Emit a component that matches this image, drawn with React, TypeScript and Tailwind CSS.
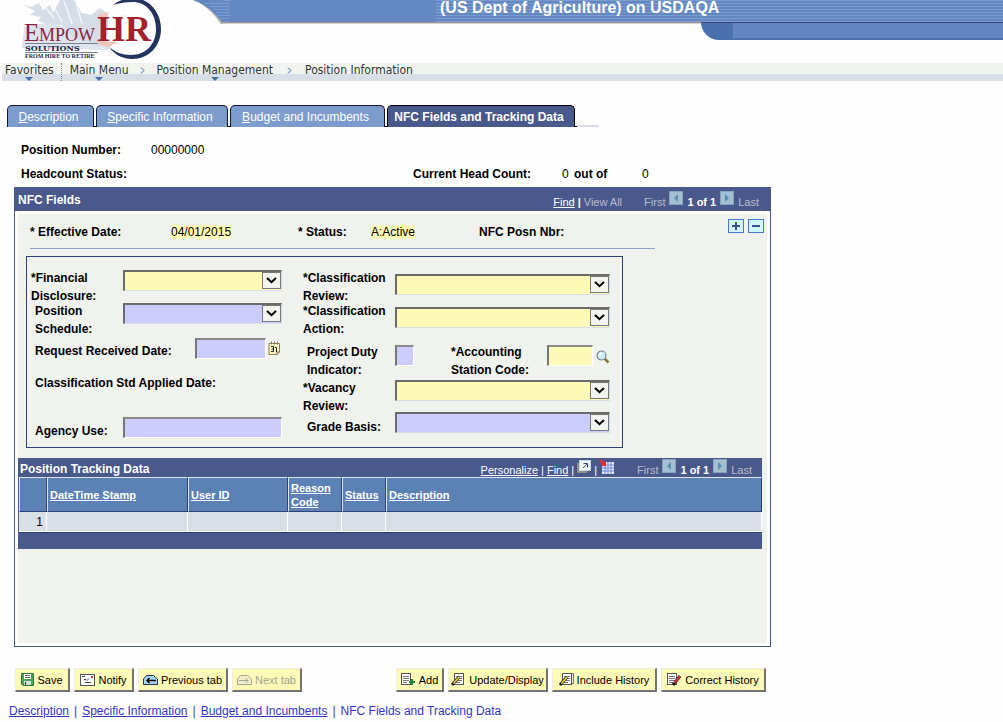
import React from "react";

const sans = "font-['Liberation_Sans',Arial,sans-serif]";

function Logo() {
  return (
    <svg width="150" height="62" viewBox="16 0 150 62" className="block" role="img" aria-label="EmpowHR Solutions">
      <g fill="#d5dde7">
        <path d="M22 4 L31 7 L39 3 L43 10 L50 5 L53 13 L60 0 L74 0 L82 13 L91 15 L100 8 L108 14 L108 34 L98 46 L74 38 L62 25 L48 24 L38 21 L41 17 L30 15 L35 11 Z" />
        <path d="M24 27 L50 22 L100 40 L112 44 L108 50 L22 48 Z" opacity="0.8" />
      </g>
      <path d="M42 3 L54 18 M52 3 L62 22 M64 1 L72 24 M76 2 L82 24" stroke="#f4f6f9" strokeWidth="1.5" fill="none" />
      <g fill="#f5c6b8">
        <path d="M98 15 L109 12 L106 18 L98 20 Z" />
        <path d="M96 41 L118 42 L108 47 L100 45 Z" />
      </g>
      <path
        d="M113 5 C119 0 127 -2 133 -2 C149 -2 161 12 161 29 C161 46 149 59 132 59 C122 59 114 54 109 47 C115 52 122 55 131 55 C146 55 156 44 156 29 C156 12 145 2 133 2 C126 2 119 3 113 5 Z"
        fill="#22335f"
      />
      <g fontFamily="'Liberation Serif', 'Times New Roman', serif">
        <text x="24" y="41" fontSize="25" fill="#8c2346">E</text>
        <text x="39" y="41" fontSize="18" fill="#8c2346">MPOW</text>
        <text x="97" y="41" fontSize="36" fontWeight="700" fill="#a3202c">HR</text>
        <text x="25" y="58" fontSize="6" fontWeight="700" fill="#222a48">FROM HIRE TO RETIRE</text>
      </g>
      <path d="M25 43.5 H98" stroke="#7b7f96" strokeWidth="1" />
      <text x="25" y="51" fontSize="8" fontWeight="700" fill="#20284a" fontFamily="'DejaVu Serif', serif">SOLUTIONS</text>
      <path d="M25 52.5 H98" stroke="#7b7f96" strokeWidth="1" />
      <path d="m125 12 1 3 3 0-2 2 1 3-3-2-3 2 1-3-2-2 3 0Z" fill="#f2f4f8" />
    </svg>
  );
}

function Banner() {
  return (
    <header className="flex h-[63px] bg-[#fefefe]">
      <div className="flex w-[193px] shrink-0 pl-[16px]">
        <Logo />
      </div>
      <svg width="30" height="25" viewBox="0 0 30 25" className="block shrink-0" aria-hidden="true">
        <path d="M0 0 C13 5 21 14 28 24 H30 V0 Z" fill="#b3aeae" />
        <path d="M0 0 H30 V22 H29 C22 13 14 5 0 0 Z" fill="#6287c1" />
        <path d="M12 3.500H30M17 6.500H30M20 9.500H30M23 12.500H30M25 15.500H30M27 18.500H30" stroke="#7b9cce" />
      </svg>
      <div className="flex min-w-0 flex-1 flex-col">
        <div className="flex h-[22px] w-full shrink-0">
          <div className="w-[7px] bg-[repeating-linear-gradient(to_bottom,#7b9cce_0px_1px,#6287c1_1px_3px)]" />
          <div className="w-[206px] bg-[#6287c1]" />
          <h1 className="flex-1 overflow-hidden whitespace-nowrap bg-[repeating-linear-gradient(to_bottom,#7b9cce_0px_1px,#6287c1_1px_3px)] pl-[4px] text-[16px] leading-[15px] font-bold text-white">
            (US Dept of Agriculture) on USDAQA
          </h1>
        </div>
        <div className="flex">
          <div className="h-[2px] w-[478px] border-t border-[#98949a] bg-[#d4d2d2]" />
          <div className="flex h-[18px] flex-1 rounded-bl-[20px] border-t border-[#3f3f85] bg-[#4a70ae]">
            <div className="ml-[32px] h-[15px] flex-1 bg-[#6485c0]" />
          </div>
        </div>
      </div>
    </header>
  );
}

function Crumb({ label, menu }: { label: string; menu?: boolean }) {
  return (
    <a href="#" className="flex flex-col items-center">
      <span className="leading-[14px]">{label}</span>
      {menu && (
        <svg width="8" height="4" viewBox="0 0 8 4" aria-hidden="true">
          <path d="M0 0H8L4 4Z" fill="#4170b0" />
        </svg>
      )}
    </a>
  );
}

function Chevron() {
  return (
    <svg width="5" height="7" viewBox="0 0 5 7" className="mt-[4px]" aria-hidden="true">
      <path d="M1 .5 4 3.500 1 6.500" stroke="#4170b0" fill="none" />
    </svg>
  );
}

function Breadcrumbs() {
  return (
    <nav
      aria-label="Breadcrumb"
      className="ml-[2px] flex h-[18px] items-start bg-[linear-gradient(to_bottom,#f0f3ee_11px,#d9dfe7_11px)] pl-[3px] font-['DejaVu_Sans_Condensed','DejaVu_Sans',sans-serif] text-[12px] text-[#333]"
    >
      <Crumb label="Favorites" menu />
      <span className="ml-[7px] mr-[8px] h-[18px] border-l border-dotted border-[#888]" />
      <Crumb label="Main Menu" menu />
      <span className="w-[28px] pl-[11px]"><Chevron /></span>
      <Crumb label="Position Management" menu />
      <span className="w-[32px] pl-[14px]"><Chevron /></span>
      <Crumb label="Position Information" />
    </nav>
  );
}

function Tab({ first, rest, width }: { first: string; rest: string; width: string }) {
  return (
    <a
      href="#"
      className={`${width} mr-[2px] flex h-[22px] items-center justify-center rounded-t-[5px] border border-b-0 border-[#14182e] bg-[#7b9ccd] text-white`}
    >
      <span className="pr-[4px]"><u>{first}</u>{rest}</span>
    </a>
  );
}

function Tabs() {
  return (
    <nav aria-label="Pages" className="mt-[24px] flex items-end pl-[7px]">
      <div className="flex h-[22px] border-b border-black">
        <Tab first="D" rest="escription" width="w-[87px]" />
        <Tab first="S" rest="pecific Information" width="w-[132px]" />
        <Tab first="B" rest="udget and Incumbents" width="w-[155px]" />
        <a
          href="#"
          aria-current="page"
          className="mr-[2px] flex h-[22px] w-[188px] items-center justify-center rounded-t-[5px] border border-b-0 border-black bg-[#49598b] font-bold text-white"
        >
          <span className="pr-[4px]">NFC Fields and Tracking Data</span>
        </a>
      </div>
      <div className="h-[2px] w-[22px] bg-[#d8dcea]" />
    </nav>
  );
}

function Pager() {
  const box = "flex h-[14px] w-[14px] items-center justify-center border border-[#86a5bd] bg-[#a4bfd0] mb-[4px]";
  return (
    <div className="flex h-[18px] items-end text-[11px] leading-[13px] text-[#b9bdca]">
      <span className="mr-[4px]">First</span>
      <button type="button" aria-label="Previous row" className={box}>
        <svg width="6" height="8" viewBox="0 0 6 8"><path d="M5 0V8L1 4Z" fill="#5f8bac" /></svg>
      </button>
      <span className="mx-[4px] font-bold text-white">1 of 1</span>
      <button type="button" aria-label="Next row" className={box}>
        <svg width="6" height="8" viewBox="0 0 6 8"><path d="M1 0V8L5 4Z" fill="#4f8dba" /></svg>
      </button>
      <span className="ml-[4px]">Last</span>
    </div>
  );
}

function Select({ id, tone, width }: { id: string; tone: string; width: string }) {
  return (
    <span className={`relative block h-[21px] shrink-0 ${width}`}>
      <select
        id={id}
        className={`block h-full w-full appearance-none rounded-none border-t-2 border-r border-b border-l-2 border-t-[#6b6b6b] border-l-[#6b6b6b] border-r-[#d8dde6] border-b-[#d8dde6] ${tone}`}
      />
      <span className="pointer-events-none absolute top-[2px] right-[1px] bottom-[2px] flex w-[19px] items-center justify-center border border-[#777] bg-[#f2f4f0]">
        <svg width="11" height="7" viewBox="0 0 11 7"><path d="M1 1 5.500 5.200 10 1" stroke="#000" strokeWidth="2" fill="none" /></svg>
      </span>
    </span>
  );
}

function Field({ id, tone, width }: { id: string; tone: string; width: string }) {
  return (
    <input
      id={id}
      type="text"
      className={`block h-[21px] shrink-0 rounded-none border-t-2 border-r border-b border-l-2 border-t-[#8a8a8a] border-l-[#777] border-r-white border-b-white px-[2px] ${width} ${tone}`}
    />
  );
}

const YELLOW = "bg-[#fdfab8]";
const LILAC = "bg-[#ccccfe]";

function CalendarIcon() {
  return (
    <svg width="13" height="15" viewBox="0 0 13 15">
      <path d="M1 2.500H11.500V11L9 13.500H1Z" fill="#fdf3c4" stroke="#9b7b4c" />
      <path d="M9 13.500V11H11.500" fill="#d9b98a" stroke="#9b7b4c" />
      <path d="M3.500 .5V3.500M6.500 .5V3.500M9.500 .5V3.500" stroke="#777" />
      <path d="M3 5.500H5.500V10.500H3M3.500 8H5.500M7 6.500H8.500V11" stroke="#222" fill="none" />
    </svg>
  );
}

function LookupIcon() {
  return (
    <svg width="14" height="14" viewBox="0 0 14 14">
      <path d="M8.500 8.500 12.500 12.500" stroke="#8a7430" strokeWidth="2.500" />
      <circle cx="5.500" cy="5.500" r="4.500" fill="#c9effb" stroke="#75808f" strokeWidth="1.200" />
      <path d="M3 5.500 5.500 3" stroke="#fff" strokeWidth="1.500" />
    </svg>
  );
}

function FieldsBox() {
  return (
    <div className="ml-[8px] mt-[7px] grid h-[192px] max-w-[597px] grid-cols-[272px_1fr] border border-[#2c4279] pt-[12px] pl-[4px] leading-[18px] font-bold">
      <div className="flex flex-col">
        <div className="flex h-[33px]">
          <label htmlFor="financial" className="w-[92px]">*Financial<br />Disclosure:</label>
          <div className="pt-[1px]"><Select id="financial" tone={YELLOW} width="w-[159px]" /></div>
        </div>
        <div className="flex h-[36px]">
          <label htmlFor="schedule" className="w-[92px] pl-[4px]">Position<br />Schedule:</label>
          <div className="pt-[1px]"><Select id="schedule" tone={LILAC} width="w-[159px]" /></div>
        </div>
        <div className="flex h-[32px]">
          <label htmlFor="received" className="w-[164px] pt-[4px] pl-[4px]">Request Received Date:</label>
          <Field id="received" tone={LILAC} width="w-[71px]" />
          <button type="button" aria-label="Choose a date" className="ml-[2px] flex h-[15px] pt-[3px]"><CalendarIcon /></button>
        </div>
        <div className="h-[47px] pt-[4px] pl-[4px]">Classification Std Applied Date:</div>
        <div className="flex items-start">
          <label htmlFor="agency" className="w-[92px] pt-[5px] pl-[4px]">Agency Use:</label>
          <Field id="agency" tone={LILAC} width="w-[159px]" />
        </div>
      </div>
      <div className="flex flex-col">
        <div className="flex h-[33px]">
          <label htmlFor="review" className="w-[92px]">*Classification<br />Review:</label>
          <div className="pt-[5px]"><Select id="review" tone={YELLOW} width="w-[215px]" /></div>
        </div>
        <div className="flex h-[41px]">
          <label htmlFor="action" className="w-[92px]">*Classification<br />Action:</label>
          <div className="pt-[5px]"><Select id="action" tone={YELLOW} width="w-[215px]" /></div>
        </div>
        <div className="flex h-[36px]">
          <label htmlFor="duty" className="w-[92px] pl-[4px]">Project Duty<br />Indicator:</label>
          <div className="pt-[2px]"><Field id="duty" tone={LILAC} width="w-[19px]" /></div>
          <label htmlFor="station" className="ml-[37px] w-[96px]">*Accounting<br />Station Code:</label>
          <div className="flex items-start pt-[2px]">
            <Field id="station" tone={YELLOW} width="w-[46px]" />
            <button type="button" aria-label="Look up station code" className="ml-[3px] mt-[5px]"><LookupIcon /></button>
          </div>
        </div>
        <div className="flex h-[33px]">
          <label htmlFor="vacancy" className="w-[92px]">*Vacancy<br />Review:</label>
          <div className="pt-[1px]"><Select id="vacancy" tone={YELLOW} width="w-[215px]" /></div>
        </div>
        <div className="flex items-start">
          <label htmlFor="grade" className="w-[92px] pt-[6px] pl-[4px]">Grade Basis:</label>
          <Select id="grade" tone={LILAC} width="w-[215px]" />
        </div>
      </div>
    </div>
  );
}

function PopoutIcon() {
  return (
    <svg width="14" height="13" viewBox="0 0 14 13">
      <path d="M1 3V12H10" fill="none" stroke="#a6a48c" strokeWidth="1.500" />
      <rect x="2.500" y=".5" width="11" height="10" fill="#f3f7f5" stroke="#c4dce8" />
      <path d="M6 8 10 4M6.500 3.500H10.500V7.500" stroke="#34466e" fill="none" />
    </svg>
  );
}

function GridIcon() {
  return (
    <svg width="15" height="15" viewBox="0 0 15 15">
      <rect x="2" y="2" width="12" height="12" fill="#e8ecff" />
      <path d="M2 5H14M2 8H14M2 11H14M5 2V14M8 2V14M11 2V14" stroke="#6b86d2" />
      <path d="M0 0H2L4 2 6 1V6H1L2 4 0 2Z" fill="#e0313b" />
    </svg>
  );
}

function TrackingGrid() {
  const th =
    "border-t border-l border-t-[#dfe5ec] border-l-[#dfe5ec] border-r border-r-[#2c4279] border-b border-b-[#2c4279] px-[2px] text-left font-bold leading-[14px] align-middle";
  const td = "border-r border-b border-white h-[20px]";
  return (
    <section className="mt-[10px] mr-[5px] bg-[#49598b] pb-[16px]">
      <div className="flex h-[19px] items-end justify-between pl-[2px] pr-[10px] text-white">
        <h3 className="font-bold leading-[16px]">Position Tracking Data</h3>
        <div className="flex items-end">
          <div className="mr-[22px] flex items-end gap-[3px] text-[11px] leading-[13px]">
            <a href="#" className="underline">Personalize</a>
            <span>|</span>
            <a href="#" className="underline">Find</a>
            <span>|</span>
            <button type="button" aria-label="Zoom" className="mb-[4px] h-[13px]"><PopoutIcon /></button>
            <span>|</span>
            <button type="button" aria-label="Download" className="mb-[2px] h-[15px]"><GridIcon /></button>
          </div>
          <Pager />
        </div>
      </div>
      <table className="w-full table-fixed border-separate border-spacing-0 border-b border-l border-b-[#2c4279] border-l-[#49598b]">
        <colgroup>
          <col className="w-[28px]" />
          <col className="w-[141px]" />
          <col className="w-[100px]" />
          <col className="w-[54px]" />
          <col className="w-[44px]" />
          <col />
        </colgroup>
        <thead className="bg-[#5b81b5] text-[11px] text-white">
          <tr className="h-[35px]">
            <th className={th} aria-label="Row" />
            <th className={th}><a href="#" className="underline">DateTime Stamp</a></th>
            <th className={th}><a href="#" className="underline">User ID</a></th>
            <th className={th}><a href="#" className="underline">Reason Code</a></th>
            <th className={th}><a href="#" className="underline">Status</a></th>
            <th className={th}><a href="#" className="underline">Description</a></th>
          </tr>
        </thead>
        <tbody className="bg-[#d9dfe7]">
          <tr>
            <td className={`${td} pr-[3px] text-right`}>1</td>
            <td className={td} />
            <td className={td} />
            <td className={td} />
            <td className={td} />
            <td className={td} />
          </tr>
        </tbody>
      </table>
    </section>
  );
}

function Panel() {
  const sq = "flex h-[14px] w-[16px] items-center justify-center border border-[#4b78c4] bg-[#d2f7fb]";
  return (
    <section className="mt-[5px] flex min-h-[460px] flex-col border border-[#49598b] bg-white">
      <div className="flex h-[23px] shrink-0 items-center justify-between bg-[#49598b] pl-[3px] pr-[11px] text-white">
        <h2 className="font-bold">NFC Fields</h2>
        <div className="flex items-end">
          <div className="mr-[22px] flex gap-[3px] text-[11px] leading-[13px] text-[#b9bdca]">
            <a href="#" className="text-white underline">Find</a>
            <span className="font-bold text-white">|</span>
            <span>View All</span>
          </div>
          <Pager />
        </div>
      </div>
      <div className="m-[3px] flex-1 bg-[#f0f2ed]">
        <div className="flex h-[35px] items-start justify-between pr-[3px]">
          <div className="ml-[12px] grid h-[35px] max-w-[625px] flex-1 grid-cols-[141px_127px_73px_108px_1fr] items-center border-b border-[#8fa0c8] pt-[2px]">
            <span className="font-bold">* Effective Date:</span>
            <span><mark className="bg-[#fdfab8] text-black">04/01/2015</mark></span>
            <span className="font-bold">* Status:</span>
            <span><mark className="bg-[#fdfab8] text-black">A:Active</mark></span>
            <span className="font-bold">NFC Posn Nbr:</span>
          </div>
          <div className="mt-[5px] flex gap-[4px]">
            <button type="button" aria-label="Add row" className={sq}>
              <svg width="8" height="8" viewBox="0 0 8 8"><path d="M0 4H8M4 0V8" stroke="#3f4f96" strokeWidth="2" /></svg>
            </button>
            <button type="button" aria-label="Delete row" className={sq}>
              <svg width="8" height="8" viewBox="0 0 8 8"><path d="M0 4H8" stroke="#3f4f96" strokeWidth="2" /></svg>
            </button>
          </div>
        </div>
        <FieldsBox />
        <TrackingGrid />
      </div>
    </section>
  );
}

function SaveIcon() {
  return (
    <svg width="13" height="13" viewBox="0 0 13 13">
      <path d="M.5.5H12.500V12.500H2L.5 11Z" fill="#4aa457" stroke="#36743c" />
      <rect x="3" y="1" width="7" height="5" fill="#fff" />
      <path d="M4 2.500H9M4 4.500H9" stroke="#667" />
      <rect x="3" y="8" width="7" height="4" fill="#d8ddd8" />
      <path d="M4.500 9V12" stroke="#333" />
    </svg>
  );
}

function NotifyIcon() {
  return (
    <svg width="15" height="12" viewBox="0 0 15 12">
      <rect x=".5" y=".5" width="14" height="11" fill="#fff" stroke="#555" />
      <path d="M2 2.500H5M4 5.500H6L7 6.500 9 4.500M5 8.500H11" stroke="#444" fill="none" />
      <path d="M11 2H13V4H11Z" fill="#c43b50" />
    </svg>
  );
}

function FolderArrow({ next }: { next?: boolean }) {
  return (
    <svg width="15" height="10" viewBox="0 0 15 10">
      <path d="M.5 9.500V4L3.500.5H10.500L14.500 4V9.500Z" fill={next ? "#f2efc9" : "#a9d4f5"} stroke={next ? "#a5a594" : "#234"} />
      {next ? (
        <path d="M2 5.500H11M8.500 3 11 5.500 8.500 8" stroke="#a5a594" fill="none" />
      ) : (
        <path d="M13 5.500H4M6.500 3 4 5.500 6.500 8" stroke="#000" strokeWidth="1.500" fill="none" />
      )}
    </svg>
  );
}

function PageIcon({ kind }: { kind: "add" | "update" | "include" | "correct" }) {
  const x = kind === "update" || kind === "include" ? 4 : 1;
  return (
    <svg width="15" height="13" viewBox="0 0 15 13">
      {kind === "include" && <path d="M6.500.5H14.500V10.500H6.500Z" fill="#e6e6e6" stroke="#777" />}
      <rect x={x - 0.5} y=".5" width="9" height="11" fill="#fff" stroke="#555" />
      <path d={`M${x + 1} 3.500H${x + 7}M${x + 1} 5.500H${x + 7}M${x + 1} 7.500H${x + 7}M${x + 1} 9.500H${x + 5}`} stroke="#777" />
      {kind === "add" && <path d="M8 9H14M11 6V12" stroke="#1f8a35" strokeWidth="2" />}
      {(kind === "update" || kind === "include") && (
        <>
          <path d="M1 12 8 4" stroke="#222" strokeWidth="3" />
          <path d="M2.500 10.500 8 4" stroke="#f5dc28" strokeWidth="1.500" />
        </>
      )}
      {kind === "correct" && (
        <>
          <path d="M6 12 13 3" stroke="#222" strokeWidth="3" />
          <path d="M7.500 10 13 3" stroke="#e3324a" strokeWidth="2" />
        </>
      )}
    </svg>
  );
}

function Action({ icon, label, width, disabled }: { icon: React.ReactNode; label: string; width: string; disabled?: boolean }) {
  return (
    <button
      type="button"
      disabled={disabled}
      className={`flex h-[24px] items-center justify-center gap-[3px] whitespace-nowrap border-t border-r-2 border-b-2 border-l border-t-[#eeeee0] border-l-[#eeeee0] border-r-[#737373] border-b-[#737373] bg-[#fdfab8] text-[11px] text-black disabled:text-[#a5a594] ${width}`}
    >
      {icon}
      {label}
    </button>
  );
}

export default function App() {
  return (
    <div className={`min-h-screen bg-[#fefefe] text-[12px] leading-[16px] text-black ${sans}`}>
      <Banner />
      <Breadcrumbs />
      <Tabs />
      <main className="ml-[14px] mr-[14px] max-w-[757px]">
        <dl className="grid grid-cols-[130px_262px_149px_12px_68px_1fr] gap-y-[8px] pt-[15px] pl-[7px]">
          <dt className="font-bold">Position Number:</dt>
          <dd className="col-span-5">00000000</dd>
          <dt className="font-bold">Headcount Status:</dt>
          <dd />
          <dt className="font-bold">Current Head Count:</dt>
          <dd>0</dd>
          <dt className="font-bold">out of</dt>
          <dd>0</dd>
        </dl>
        <Panel />
        <div className="mt-[21px] flex flex-wrap justify-between pl-[1px] pr-[5px]">
          <div className="flex gap-[4px]">
            <Action icon={<SaveIcon />} label="Save" width="w-[55px]" />
            <Action icon={<NotifyIcon />} label="Notify" width="w-[60px]" />
            <Action icon={<FolderArrow />} label="Previous tab" width="w-[90px]" />
            <Action icon={<FolderArrow next />} label="Next tab" width="w-[70px]" disabled />
          </div>
          <div className="flex gap-[4px]">
            <Action icon={<PageIcon kind="add" />} label="Add" width="w-[48px]" />
            <Action icon={<PageIcon kind="update" />} label="Update/Display" width="w-[100px]" />
            <Action icon={<PageIcon kind="include" />} label="Include History" width="w-[105px]" />
            <Action icon={<PageIcon kind="correct" />} label="Correct History" width="w-[105px]" />
          </div>
        </div>
      </main>
      <nav aria-label="Page links" className="flex gap-[5px] pt-[11px] pl-[9px] text-[#3333cc]">
        <a href="#" className="underline">Description</a>
        <span>|</span>
        <a href="#" className="underline">Specific Information</a>
        <span>|</span>
        <a href="#" className="underline">Budget and Incumbents</a>
        <span>|</span>
        <span>NFC Fields and Tracking Data</span>
      </nav>
    </div>
  );
}
